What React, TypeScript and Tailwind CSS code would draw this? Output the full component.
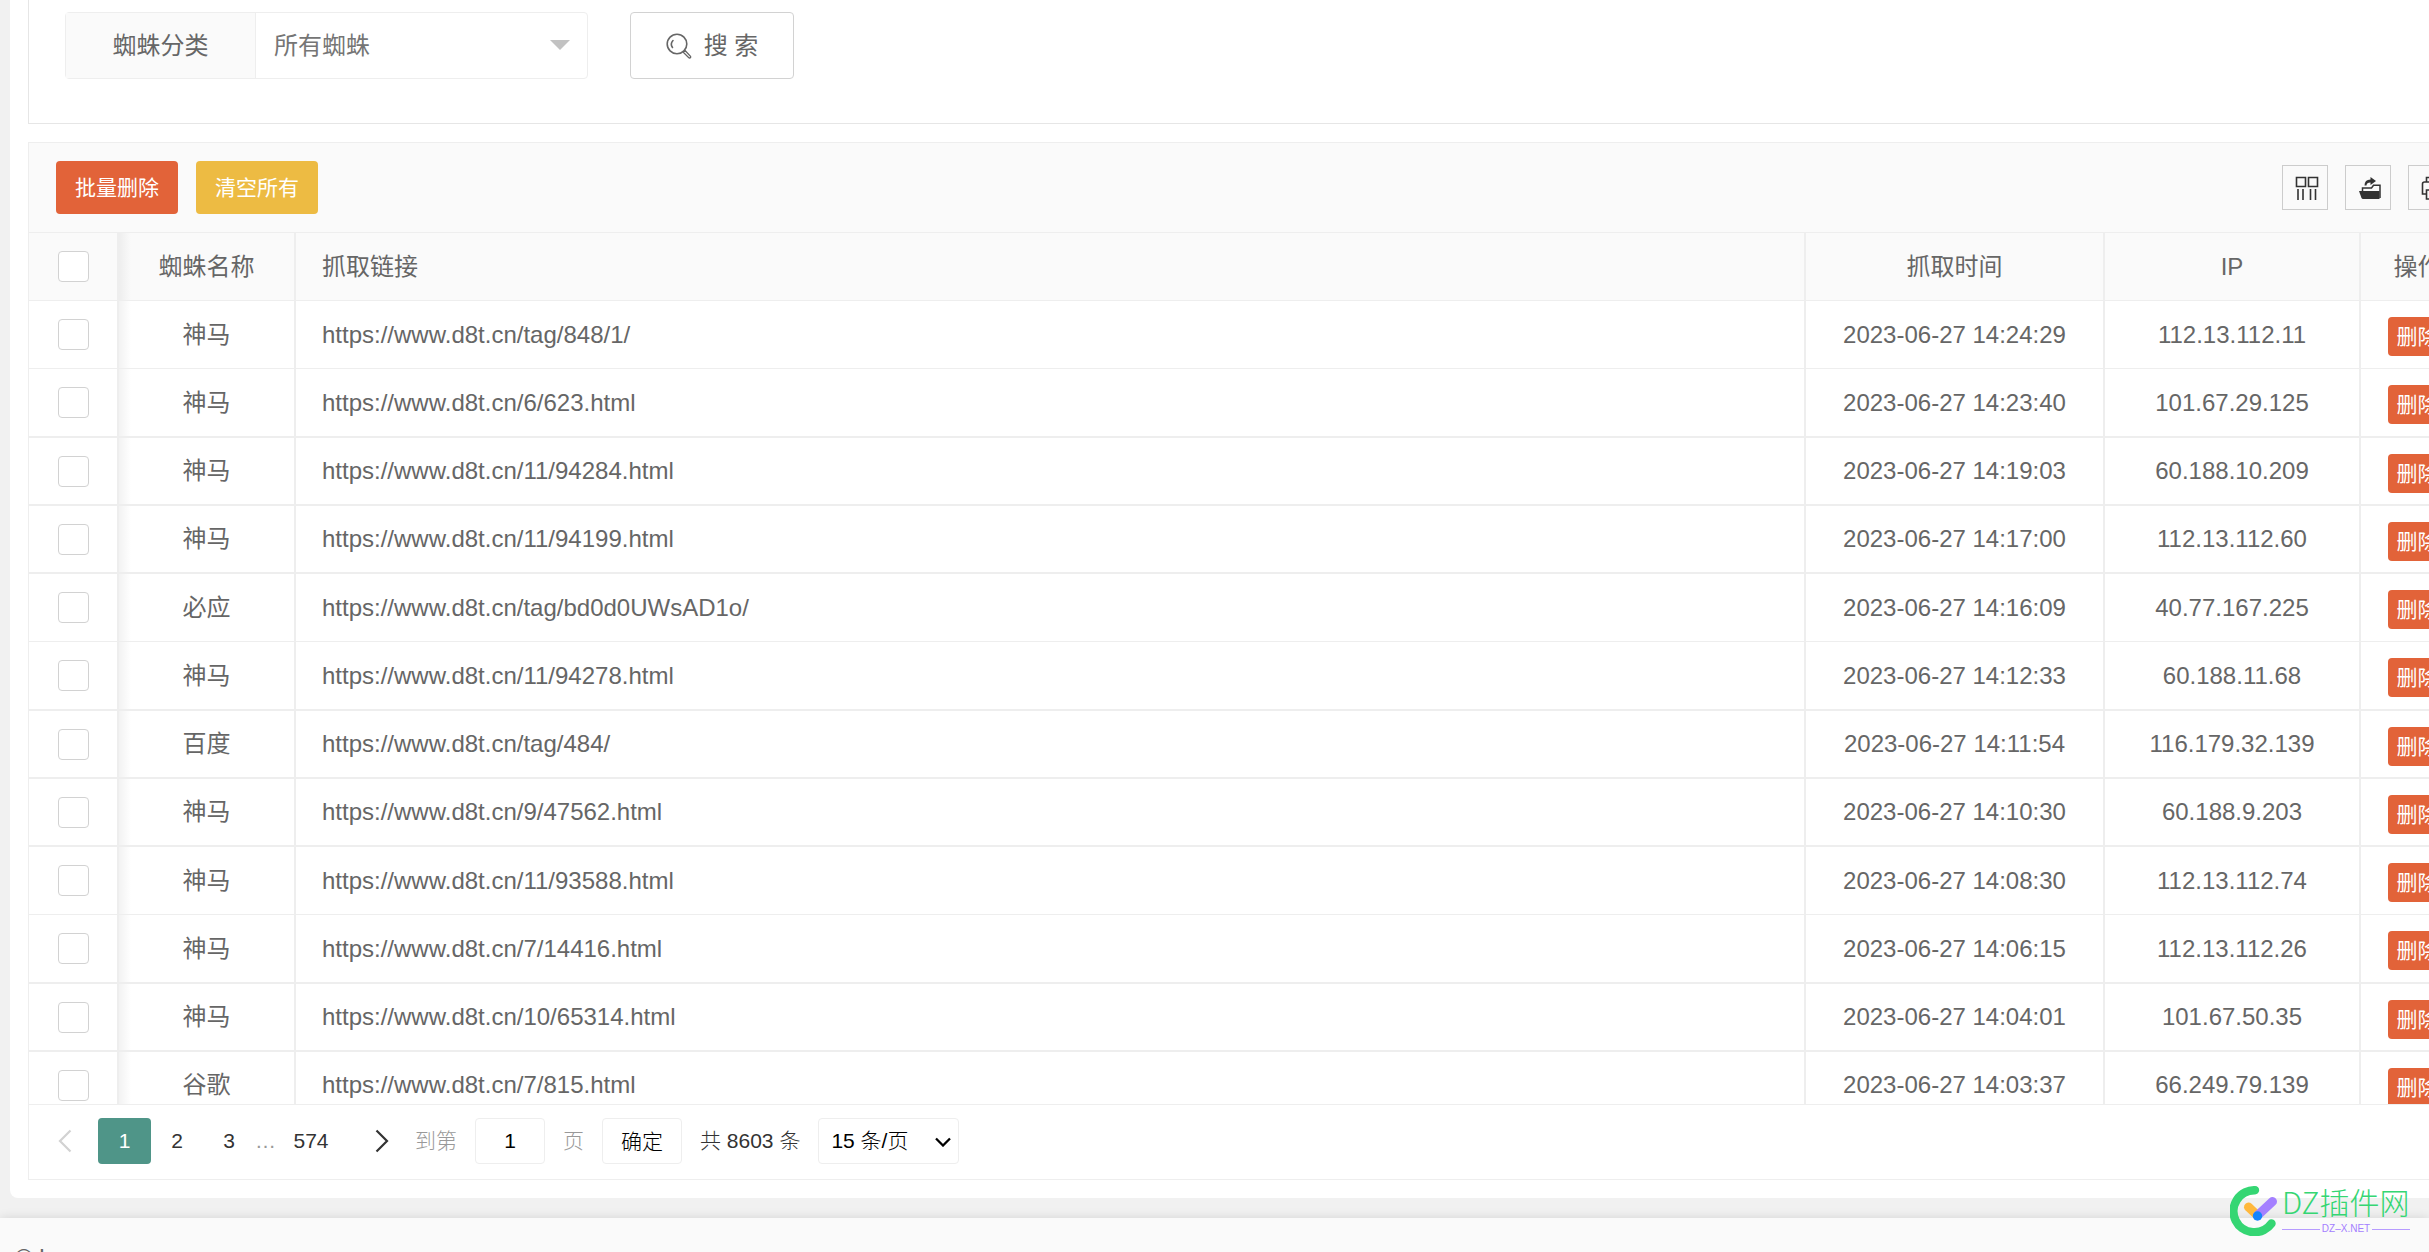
import React from "react";

const rows: [string, string, string, string][] = [
  ["神马", "https://www.d8t.cn/tag/848/1/", "2023-06-27 14:24:29", "112.13.112.11"],
  ["神马", "https://www.d8t.cn/6/623.html", "2023-06-27 14:23:40", "101.67.29.125"],
  ["神马", "https://www.d8t.cn/11/94284.html", "2023-06-27 14:19:03", "60.188.10.209"],
  ["神马", "https://www.d8t.cn/11/94199.html", "2023-06-27 14:17:00", "112.13.112.60"],
  ["必应", "https://www.d8t.cn/tag/bd0d0UWsAD1o/", "2023-06-27 14:16:09", "40.77.167.225"],
  ["神马", "https://www.d8t.cn/11/94278.html", "2023-06-27 14:12:33", "60.188.11.68"],
  ["百度", "https://www.d8t.cn/tag/484/", "2023-06-27 14:11:54", "116.179.32.139"],
  ["神马", "https://www.d8t.cn/9/47562.html", "2023-06-27 14:10:30", "60.188.9.203"],
  ["神马", "https://www.d8t.cn/11/93588.html", "2023-06-27 14:08:30", "112.13.112.74"],
  ["神马", "https://www.d8t.cn/7/14416.html", "2023-06-27 14:06:15", "112.13.112.26"],
  ["神马", "https://www.d8t.cn/10/65314.html", "2023-06-27 14:04:01", "101.67.50.35"],
  ["谷歌", "https://www.d8t.cn/7/815.html", "2023-06-27 14:03:37", "66.249.79.139"],
];

function Check({ label }: { label: string }) {
  return (
    <input
      type="checkbox"
      aria-label={label}
      className="mx-auto block size-[31px] appearance-none rounded-[4px] border border-[#d2d2d2] bg-white checked:bg-[#4f9588]"
    />
  );
}

function ToolButton({ label, children }: { label: string; children: React.ReactNode }) {
  return (
    <button
      type="button"
      aria-label={label}
      className="flex h-[45px] w-[46px] items-center justify-center border border-[#ccc] pl-1 text-[#333]"
    >
      {children}
    </button>
  );
}

function SearchForm() {
  return (
    <form className="flex h-[124px] items-start border-b border-l border-[#e6e6e6] pt-3 pl-9">
      <div className="flex h-[67px] rounded-[4px] border border-[#eee]">
        <label
          htmlFor="kind"
          className="flex w-[190px] items-center justify-center border-r border-[#eee] bg-[#fafafa]"
        >
          蜘蛛分类
        </label>
        <div className="relative w-[331px]">
          <select id="kind" className="h-full w-full appearance-none bg-transparent pl-[18px] text-[#757575]">
            <option>所有蜘蛛</option>
          </select>
          <span className="pointer-events-none absolute top-[27px] right-[17px] border-x-[10px] border-t-[10px] border-x-transparent border-t-[#c2c2c2]" />
        </div>
      </div>
      <button
        type="button"
        className="ml-[42px] flex h-[67px] w-[164px] items-center justify-center gap-3 rounded-[4px] border border-[#d2d2d2]"
      >
        <svg viewBox="0 0 26 26" className="size-[26px]" fill="none" stroke="#666" strokeWidth="1.6">
          <circle cx="11" cy="11" r="9.8" />
          <path d="M6.500 14.500a5.500 5.500 0 0 1 .5-7" strokeLinecap="round" />
          <path d="M17.500 19.500l1.800-1.800 5.200 5.600c.6 1-.7 2.200-1.700 1.500z" strokeWidth="1.300" />
        </svg>
        <span>搜 索</span>
      </button>
    </form>
  );
}

function Toolbar() {
  return (
    <div className="flex h-[90px] items-center justify-between border-b border-[#eee] bg-[#fafafa] pr-5 pl-[27px]">
      <div className="flex gap-[18px] text-[21px] text-white">
        <button type="button" className="h-[53px] w-[122px] rounded-[4px] bg-[#e26339]">
          批量删除
        </button>
        <button type="button" className="h-[53px] w-[122px] rounded-[4px] bg-[#edbb43]">
          清空所有
        </button>
      </div>
      <div className="flex gap-[17px]">
        <ToolButton label="筛选列">
          <svg viewBox="0 0 24 24" className="size-6" fill="none" stroke="currentColor" strokeWidth="1.600">
            <path d="M1.500 1.500h9v9h-9zM13.500 1.500h9v9h-9zM3 13v11M8 13v11M15.500 13v11M20.500 13v11" />
          </svg>
        </ToolButton>
        <ToolButton label="导出">
          <svg viewBox="0 0 24 24" className="size-6" fill="currentColor">
            <path d="M1 15h20.500v8H5q-1 0-1.500-1z" />
            <path d="M4.500 15v-3h9l2-2.700h6.500V22" fill="none" stroke="currentColor" strokeWidth="1.500" />
            <path d="M6.500 9.500q0-6 6-6V1l5.500 4-5.500 4V6.500q-4 0-4 3z" />
          </svg>
        </ToolButton>
        <ToolButton label="打印">
          <svg viewBox="0 0 24 24" className="size-6" fill="none" stroke="currentColor" strokeWidth="1.600">
            <path d="M5.500 6V1.500h13V6M5 18H1.500V8q0-2 2-2h17q2 0 2 2v10H19M5.500 14h13v9h-13zM8 9.500h8" />
          </svg>
        </ToolButton>
      </div>
    </div>
  );
}

function SpiderTable() {
  return (
    <div className="h-[871px] overflow-hidden">
      <table className="w-full table-fixed border-separate border-spacing-0 text-center [&_td]:border-b-2 [&_td]:border-[#eee] [&_td]:p-0 [&_td:not(:last-child)]:border-r-2 [&_th]:border-b [&_th]:border-[#eee] [&_th]:p-0 [&_th]:font-normal [&_th:not(:last-child)]:border-r-2 [&_tr:nth-child(4n+1)>td]:border-b">
        <colgroup>
          <col className="w-[90px]" />
          <col className="w-[177px]" />
          <col />
          <col className="w-[299px]" />
          <col className="w-[256px]" />
          <col className="w-[113px]" />
        </colgroup>
        <thead>
          <tr className="h-[68px] bg-[#fafafa]">
            <th>
              <Check label="全选" />
            </th>
            <th className="bg-linear-to-r from-black/5 to-transparent to-[12px]">蜘蛛名称</th>
            <th>
              <div className="pl-[26px] text-left">抓取链接</div>
            </th>
            <th>抓取时间</th>
            <th>IP</th>
            <th>操作</th>
          </tr>
        </thead>
        <tbody>
          {rows.map(([name, url, time, ip]) => (
            <tr key={time} className="h-[68px] nth-[4n+2]:h-[69px]">
              <td>
                <Check label={`选择 ${time}`} />
              </td>
              <td className="bg-linear-to-r from-black/5 to-transparent to-[12px]">{name}</td>
              <td>
                <div className="pl-[26px] text-left">{url}</div>
              </td>
              <td>{time}</td>
              <td>{ip}</td>
              <td>
                <button
                  type="button"
                  className="mx-auto mt-1 block h-[39px] w-[60px] rounded-[4px] bg-[#e26339] text-[21px] leading-[39px] text-white"
                >
                  删除
                </button>
              </td>
            </tr>
          ))}
        </tbody>
      </table>
    </div>
  );
}

function Pager() {
  return (
    <nav className="flex h-[76px] items-start border-y border-[#eee] pt-[13px] text-[21px] leading-[46px] font-light text-[#333] [&_button]:h-[46px]">
      <button type="button" aria-label="上一页" className="ml-[29px] text-[#d2d2d2]">
        <svg viewBox="0 0 14 24" className="h-6 w-3.5" fill="none" stroke="currentColor" strokeWidth="2.200">
          <path d="M12.500 1.500L2 12l10.500 10.500" />
        </svg>
      </button>
      <button type="button" className="ml-[26px] w-[53px] rounded-[4px] bg-[#4f9588] text-white">
        1
      </button>
      <button type="button" className="w-[52px]">
        2
      </button>
      <button type="button" className="w-[52px]">
        3
      </button>
      <span className="w-[18px] text-center text-[#999]">…</span>
      <button type="button" className="w-[76px]">
        574
      </button>
      <button type="button" aria-label="下一页" className="ml-[26px]">
        <svg viewBox="0 0 14 24" className="h-6 w-3.5" fill="none" stroke="currentColor" strokeWidth="2.200">
          <path d="M1.500 1.500L12 12 1.500 22.500" />
        </svg>
      </button>
      <label htmlFor="page" className="ml-[26px] text-[#999]">
        到第
      </label>
      <input
        id="page"
        defaultValue="1"
        className="mx-[18px] h-[46px] w-[70px] rounded-[4px] border border-[#eee] text-center text-black"
      />
      <span className="text-[#999]">页</span>
      <button type="button" className="ml-[18px] w-[80px] rounded-[4px] border border-[#eee] text-black">
        确定
      </button>
      <span className="ml-[18px]">共 8603 条</span>
      <div className="relative ml-[18px]">
        <select
          aria-label="每页条数"
          className="h-[46px] w-[141px] appearance-none rounded-[4px] border border-[#eee] pl-3 leading-[44px] text-black"
        >
          <option>15 条/页</option>
        </select>
        <svg
          viewBox="0 0 16 10"
          className="pointer-events-none absolute top-[19px] right-2 h-2.5 w-4"
          fill="none"
          stroke="#000"
          strokeWidth="2.300"
        >
          <path d="M1 1.500l7 7 7-7" />
        </svg>
      </div>
    </nav>
  );
}

function Brand() {
  return (
    <div className="absolute right-[19px] bottom-4 flex items-center gap-1 font-['Noto_Sans_CJK_SC',sans-serif] font-light">
      <svg viewBox="0 0 48 50" className="h-[50px] w-12" fill="none" strokeLinecap="round">
        <path d="M25 4.200A21 21 0 1 0 41.500 37.500" stroke="#35d673" strokeWidth="8.400" />
        <path d="M18.500 21l9 8.500" stroke="#ffb83d" strokeWidth="9" />
        <path d="M42.500 15.500L27.500 29.500" stroke="#a480ff" strokeWidth="9" />
        <circle cx="27.500" cy="30" r="4.700" fill="#1684fc" />
      </svg>
      <div className="flex w-32 flex-col">
        <span className="text-[30px] leading-7 whitespace-nowrap text-[#35d673]">DZ插件网</span>
        <span className="mt-2 flex items-center gap-0.5 font-['Liberation_Sans',sans-serif] text-[10px] leading-3 text-[#a480ff]">
          <span className="h-px flex-1 bg-[#b79cff]" />
          DZ–X.NET
          <span className="h-px flex-1 bg-[#b79cff]" />
        </span>
      </div>
    </div>
  );
}

export default function App() {
  return (
    <div className="relative flex h-screen flex-col overflow-hidden bg-[#f1f1f1] font-['Liberation_Sans','Noto_Sans_CJK_SC',sans-serif] text-2xl text-[#666]">
      <main className="-mr-[63px] ml-2.5 shrink-0 rounded-b-[8px] bg-white pr-[18px] pb-[18px] pl-[18px]">
        <SearchForm />
        <section className="mt-[18px] border-t border-l border-[#eee]">
          <Toolbar />
          <SpiderTable />
          <Pager />
        </section>
      </main>
      <footer className="mt-5 flex-1 bg-[#fafafa] pt-[26px] pl-[15px] leading-7 shadow-[0_0_10px_rgba(0,0,0,0.12)]">
        © b
      </footer>
      <Brand />
    </div>
  );
}
